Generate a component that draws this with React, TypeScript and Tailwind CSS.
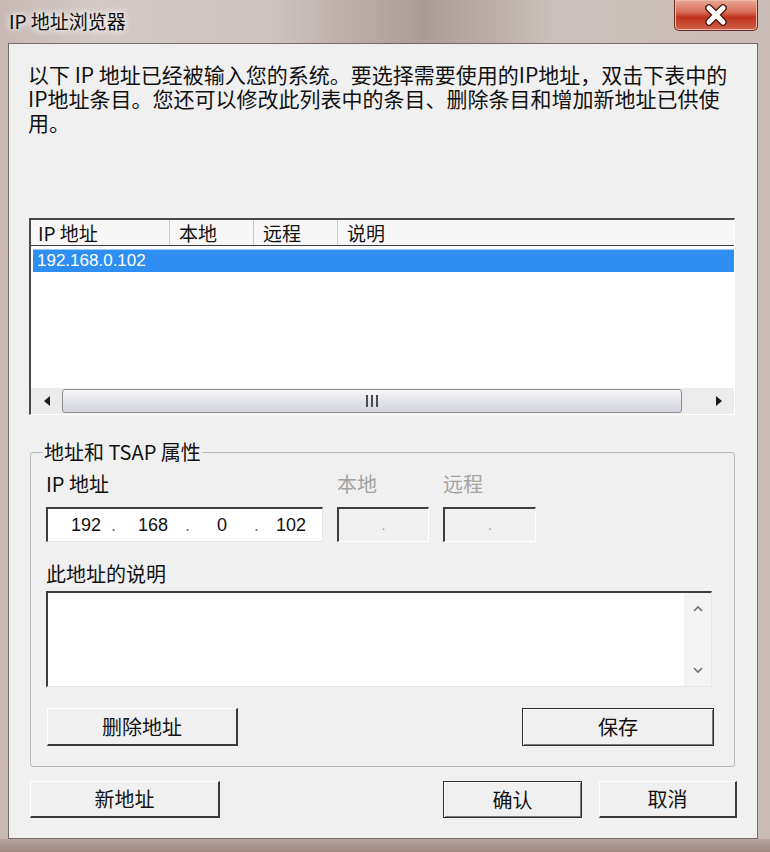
const cjk = "font-['Noto_Sans_CJK_SC','Noto_Sans',sans-serif]"

function Btn({ label, w, def }: { label: string; w: string; def?: boolean }) {
  return (
    <div
      className={`${w} h-full flex items-center justify-center bg-[#f0f0f0] text-[20px] text-[#111] ${
        def
          ? 'border border-[#2e2e2e] shadow-[inset_1px_1px_0_#ffffff,inset_-1px_-1px_0_#7a7a7a]'
          : 'border-t border-l border-t-white border-l-white border-r-2 border-b-2 border-r-[#3a3a3a] border-b-[#3a3a3a]'
      }`}
    >
      {label}
    </div>
  )
}

function Tri({ dir }: { dir: 'l' | 'r' }) {
  return (
    <svg width="6" height="10" viewBox="0 0 6 10">
      {dir === 'l' ? <polygon points="6,0 0,5 6,10" fill="#1a1a1a" /> : <polygon points="0,0 6,5 0,10" fill="#1a1a1a" />}
    </svg>
  )
}

export default function App() {
  return (
    <div className={`w-[770px] h-[852px] flex flex-col overflow-hidden ${cjk} bg-[linear-gradient(90deg,#c7b8b3_0%,#d3c9c5_12%,#cfc4c0_35%,#ab9b95_55%,#cbc0bb_72%,#c9bbb6_100%)]`}>
      {/* title bar */}
      <div className="h-[43px] flex items-start shrink-0">
        <div className="pl-[9px] pt-[9px] text-[19px] leading-[24px] text-[#0c0c0c] [text-shadow:0_0_6px_#ffffff,0_0_10px_#ffffff]">
          IP 地址浏览器
        </div>
        <div className="ml-auto mr-[12px] w-[84px] h-[31px] rounded-b-[5px] border border-t-0 border-[#6d2a20] bg-[linear-gradient(180deg,#eaa796_0%,#d66c57_40%,#c0321e_58%,#cf6048_100%)] flex items-center justify-center shadow-[inset_0_0_0_1px_#f0b8a8]">
          <svg width="28" height="22" viewBox="0 0 28 22">
            <path d="M7 4 L21 18 M21 4 L7 18" stroke="#4a1a12" strokeWidth="7.5" strokeLinecap="round" />
            <path d="M7 4 L21 18 M21 4 L7 18" stroke="#ffffff" strokeWidth="5" strokeLinecap="round" />
          </svg>
        </div>
      </div>

      {/* client area */}
      <div className="flex pl-[8px] shrink-0">
        <div className="w-[750px] h-[796px] border border-[#746966] bg-[#f0f0f0] flex flex-col text-[#111]">
          <p className="pt-[18px] pl-[19px] text-[21px] leading-[24px]">
            以下 IP 地址已经被输入您的系统。要选择需要使用的IP地址，双击下表中的
            <br />
            IP地址条目。您还可以修改此列表中的条目、删除条目和增加新地址已供使
            <br />
            用。
          </p>

          {/* list view */}
          <div className="mt-[84px] ml-[20px] w-[706px] h-[197px] border-t-2 border-l-2 border-t-[#4a4a4a] border-l-[#4a4a4a] border-r border-b border-r-white border-b-white bg-white flex flex-col">
            <div className="h-[26px] flex bg-[#f7f7f7] border-b border-b-[#3c3c3c] text-[19px] leading-[25px] shrink-0">
              <div className="w-[139px] pl-[7px] border-r border-r-[#c9c9c9]">IP 地址</div>
              <div className="w-[84px] pl-[9px] border-r border-r-[#c9c9c9]">本地</div>
              <div className="w-[84px] pl-[9px] border-r border-r-[#c9c9c9]">远程</div>
              <div className="flex-1 pl-[9px]">说明</div>
            </div>
            <div className="flex-1">
              <div className="mt-[3px] ml-[2px] h-[23px] bg-[#2f8ef2] border-t border-t-[#9ccbf8] flex items-center pl-[4px] text-white font-['Liberation_Sans',sans-serif] text-[17px]">
                192.168.0.102
              </div>
            </div>
            <div className="h-[26px] flex items-center bg-[#ececec] shrink-0">
              <div className="w-[31px] h-full flex items-center justify-center">
                <Tri dir="l" />
              </div>
              <div className="w-[620px] h-[24px] rounded-[3px] border border-[#8e8f97] bg-[linear-gradient(180deg,#f6f6f8_0%,#e4e5ea_50%,#d2d3da_100%)] flex items-center justify-center gap-[3px]">
                <span className="w-[2px] h-[12px] bg-[#4a4a52]" />
                <span className="w-[2px] h-[12px] bg-[#4a4a52]" />
                <span className="w-[2px] h-[12px] bg-[#4a4a52]" />
              </div>
              <div className="flex-1" />
              <div className="w-[31px] h-full flex items-center justify-center">
                <Tri dir="r" />
              </div>
            </div>
          </div>

          {/* group box */}
          <fieldset className="mt-[25px] ml-[21px] w-[705px] border border-[#b9b9b9] rounded-[3px] pl-[15px] pr-[20px] pb-[20px]">
            <legend className="-ml-[3px] px-[1px] text-[20px] leading-[24px]">地址和 TSAP 属性</legend>
            <div className="mt-[8px] flex gap-[14px] text-[20px] leading-[24px]">
              <div className="w-[277px]">IP 地址</div>
              <div className="w-[92px] text-[#a3a3a3]">本地</div>
              <div className="w-[93px] text-[#a3a3a3]">远程</div>
            </div>
            <div className="mt-[11px] flex gap-[14px] h-[35px]">
              <div className="w-[277px] h-full bg-white border-t-2 border-l-2 border-t-[#3e3e3e] border-l-[#3e3e3e] border-r border-b border-r-[#e4e4e4] border-b-[#e4e4e4] flex items-center font-['Liberation_Sans',sans-serif] text-[18px] text-[#111]">
                <span className="ml-[23px] w-[30px] text-center">192</span>
                <span className="ml-[10px] w-[4px] text-center text-[#777]">.</span>
                <span className="ml-[23px] w-[30px] text-center">168</span>
                <span className="ml-[17px] w-[4px] text-center text-[#777]">.</span>
                <span className="ml-[28px] w-[10px] text-center">0</span>
                <span className="ml-[27px] w-[4px] text-center text-[#777]">.</span>
                <span className="ml-[18px] w-[30px] text-center">102</span>
              </div>
              <div className="w-[92px] h-full bg-[#f0f0f0] border-t-2 border-l-2 border-t-[#3e3e3e] border-l-[#3e3e3e] border-r border-b border-r-white border-b-white flex items-center justify-center font-['Liberation_Sans',sans-serif] text-[14px] text-[#9a9a9a]">
                .
              </div>
              <div className="w-[93px] h-full bg-[#f0f0f0] border-t-2 border-l-2 border-t-[#3e3e3e] border-l-[#3e3e3e] border-r border-b border-r-white border-b-white flex items-center justify-center font-['Liberation_Sans',sans-serif] text-[14px] text-[#9a9a9a]">
                .
              </div>
            </div>
            <div className="mt-[20px] text-[20px] leading-[24px]">此地址的说明</div>
            <div className="mt-[5px] w-[666px] h-[96px] flex bg-white border-t-2 border-l-2 border-t-[#3e3e3e] border-l-[#3e3e3e] border-r border-b border-r-[#e8e8e8] border-b-[#e8e8e8]">
              <div className="flex-1" />
              <div className="w-[27px] h-full bg-[#f3f3f3] flex flex-col items-center justify-between py-[12px]">
                <svg width="10" height="7" viewBox="0 0 10 7">
                  <path d="M1 6 L5 2 L9 6" stroke="#707070" strokeWidth="1.6" fill="none" />
                </svg>
                <svg width="10" height="7" viewBox="0 0 10 7">
                  <path d="M1 1 L5 5 L9 1" stroke="#707070" strokeWidth="1.6" fill="none" />
                </svg>
              </div>
            </div>
            <div className="mt-[21px] w-[668px] h-[38px] flex justify-between">
              <div className="ml-[1px] h-full">
                <Btn label="删除地址" w="w-[191px]" />
              </div>
              <Btn label="保存" w="w-[192px]" def />
            </div>
          </fieldset>

          {/* bottom buttons */}
          <div className="mt-[14px] h-[37px] flex pl-[21px] pr-[20px]">
            <Btn label="新地址" w="w-[190px]" />
            <div className="ml-auto flex gap-[17px] h-full">
              <Btn label="确认" w="w-[139px]" def />
              <Btn label="取消" w="w-[138px]" />
            </div>
          </div>
        </div>
      </div>
      <div className="flex-1 bg-[linear-gradient(180deg,#b7a59f_0%,#9c8680_100%)]" />
    </div>
  )
}
